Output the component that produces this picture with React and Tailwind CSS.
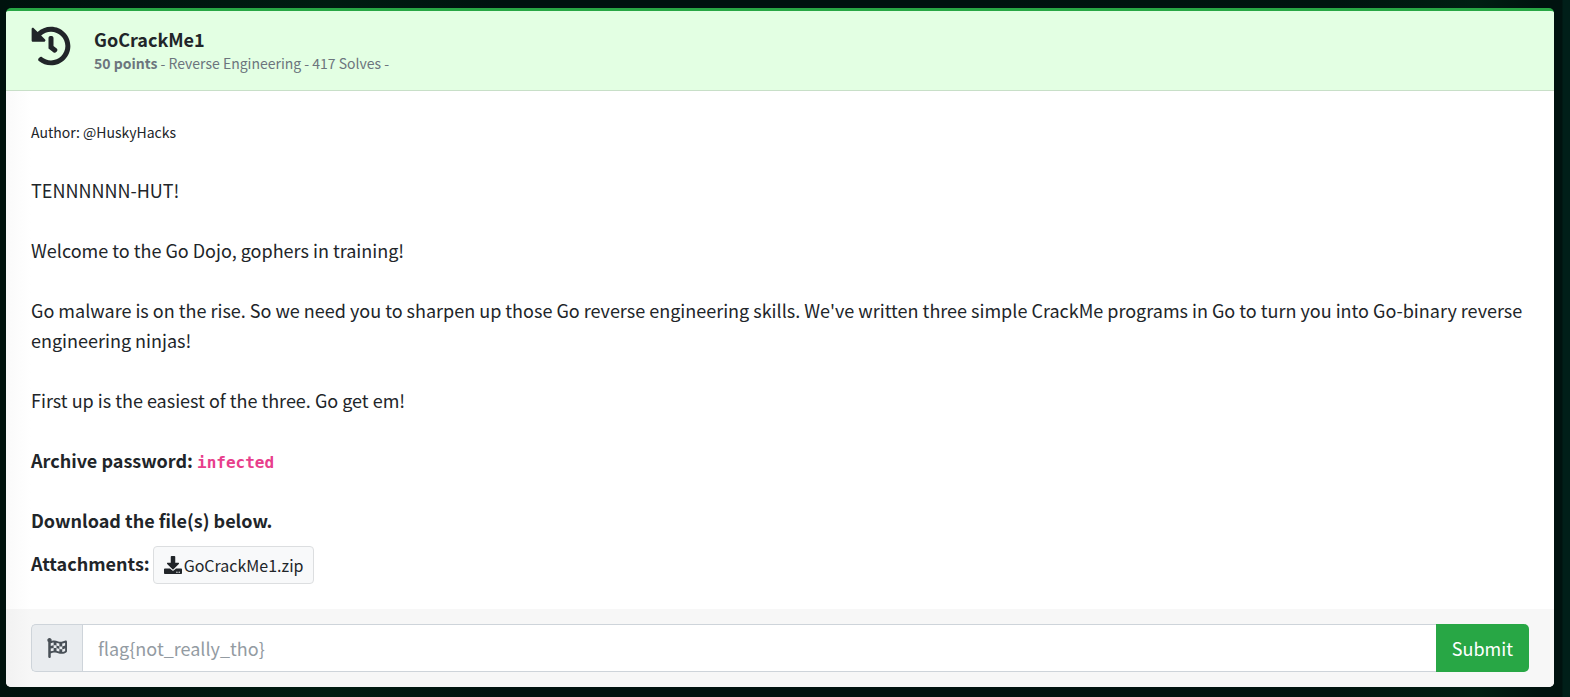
import { FaHistory, FaDownload, FaFlagCheckered } from "react-icons/fa";

export default function App() {
  return (
    <main className="min-h-screen bg-[#000f0c] bg-[linear-gradient(270deg,#001f19_7px,transparent_8px),linear-gradient(90deg,#00120d_0%,#00140f_8%,#001c11_21%,#00120f_32%,#00120f_62%,#00140f_85%,#001f12_94%,#00120f_98%)] pt-2 pr-4 pb-[10px] pl-[6px] font-['Noto_Sans_CJK_SC',sans-serif] text-lg leading-[30px] text-[#212529]">
      <article className="overflow-hidden rounded-[5px] border-t-3 border-[#28a745] bg-white">
        <header className="flex gap-[23px] border-b border-[#c8dfc8] bg-[#e3ffe3] px-[25px] py-[15px]">
          <FaHistory className="size-10" />
          <div className="pt-px">
            <h1 className="text-lg leading-6 font-bold">GoCrackMe1</h1>
            <p className="text-sm leading-6 text-[#6c757d]">
              <b>50 points</b> - Reverse Engineering - 417 Solves -
            </p>
          </div>
        </header>

        <section className="flex flex-col gap-[30px] bg-[linear-gradient(90deg,#fafafa,#ffffff_25px)] px-[25px] pt-7 pb-[25px]">
          <p className="text-sm leading-[26px]">Author: @HuskyHacks</p>
          <p>TENNNNNN-HUT!</p>
          <p>Welcome to the Go Dojo, gophers in training!</p>
          <p>
            Go malware is on the rise. So we need you to sharpen up those Go reverse engineering skills. We've
            written three simple CrackMe programs in Go to turn you into Go-binary reverse engineering ninjas!
          </p>
          <p>First up is the easiest of the three. Go get em!</p>
          <p className="font-bold">
            Archive password:{" "}
            <code className="font-['DejaVu_Sans_Mono',monospace] text-base leading-none text-[#e83e8c]">infected</code>
          </p>
          <div className="font-bold">
            <p>Download the file(s) below.</p>
            <div className="mt-[11px] flex items-start gap-[3px]">
              <span className="leading-[34px]">Attachments:</span>
              <a
                href="#download"
                className="flex items-center gap-[2px] rounded-[4px] border border-[#dcdee0] bg-[#f8f9fa] px-[10px] py-[6px] text-base leading-6 font-normal"
              >
                <FaDownload className="size-[18px]" />
                GoCrackMe1.zip
              </a>
            </div>
          </div>
        </section>

        <form className="flex bg-[linear-gradient(90deg,#f2f2f2,#f7f7f7_25px)] px-[25px] py-[15px]">
          <label
            htmlFor="flag"
            className="flex w-[51px] items-center justify-center rounded-l-[5px] border border-r-0 border-[#ced4da] bg-[#e9ecef] text-[#495057]"
          >
            <FaFlagCheckered className="size-5" aria-label="Flag" />
          </label>
          <input
            id="flag"
            type="text"
            placeholder="flag{not_really_tho}"
            className="h-12 min-w-0 flex-1 border border-r-0 border-[#ced4da] bg-white px-[15px] placeholder:text-[#939ba2]"
          />
          <button type="button" className="rounded-r-[5px] bg-[#28a745] px-4 text-white">
            Submit
          </button>
        </form>
      </article>
    </main>
  );
}
